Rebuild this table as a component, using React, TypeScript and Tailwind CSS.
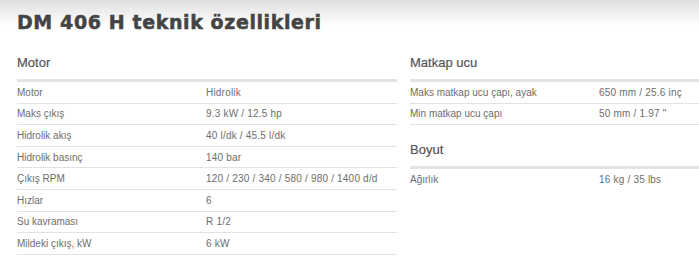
import React from "react";

type Row = [string, string];

const motor: Row[] = [
  ["Motor", "Hidrolik"],
  ["Maks çıkış", "9.3 kW / 12.5 hp"],
  ["Hidrolik akış", "40 l/dk / 45.5 l/dk"],
  ["Hidrolik basınç", "140 bar"],
  ["Çıkış RPM", "120 / 230 / 340 / 580 / 980 / 1400 d/d"],
  ["Hızlar", "6"],
  ["Su kavraması", "R 1/2"],
  ["Mildeki çıkış, kW", "6 kW"],
];

const matkap: Row[] = [
  ["Maks matkap ucu çapı, ayak", "650 mm / 25.6 inç"],
  ["Min matkap ucu çapı", "50 mm / 1.97 \""],
];

const boyut: Row[] = [["Ağırlık", "16 kg / 35 lbs"]];

function Section({ title, rows, first = true, lastBorder = true }: { title: string; rows: Row[]; first?: boolean; lastBorder?: boolean }) {
  return (
    <div className={first ? "mt-[22px]" : "mt-[17px]"}>
      <div className="h-[16px] leading-[16px] text-[13px] text-[#555555] mb-[8px] [-webkit-text-stroke:0.2px_#555555]">{title}</div>
      <div className="h-[3px] bg-[#e3e3e3]" />
      {rows.map(([k, v], i) => (
        <div
          key={i}
          className={
            "grid grid-cols-[189px_1fr] items-center h-[21.6px] text-[10px] text-[#6d6d6d] " +
            (i === rows.length - 1 && !lastBorder ? "" : "border-b border-[#e2e2e2]")
          }
        >
          <div>{k}</div>
          <div className="tracking-[0.2px]">{v}</div>
        </div>
      ))}
    </div>
  );
}

export default function App() {
  return (
    <div
      className="w-[699px] h-[274px] overflow-hidden bg-[linear-gradient(to_bottom,#dfdfdf,#ffffff_26px)]"
      style={{ fontFamily: '"Liberation Sans", Arial, sans-serif' }}
    >
      <div className="pl-[17px] pt-[11px]">
        <h1
          className="h-[22px] leading-[22px] text-[19px] font-bold text-[#444444] whitespace-nowrap tracking-[0.6px] [-webkit-text-stroke:0.5px_#444444]"
          style={{ fontFamily: '"DejaVu Sans", Verdana, sans-serif' }}
        >
          DM 406 H teknik özellikleri
        </h1>
        <div className="flex gap-[13px]">
          <div className="w-[380px] shrink-0">
            <Section title="Motor" rows={motor} />
          </div>
          <div className="w-[380px] shrink-0">
            <Section title="Matkap ucu" rows={matkap} />
            <Section title="Boyut" rows={boyut} first={false} lastBorder={false} />
          </div>
        </div>
      </div>
    </div>
  );
}
